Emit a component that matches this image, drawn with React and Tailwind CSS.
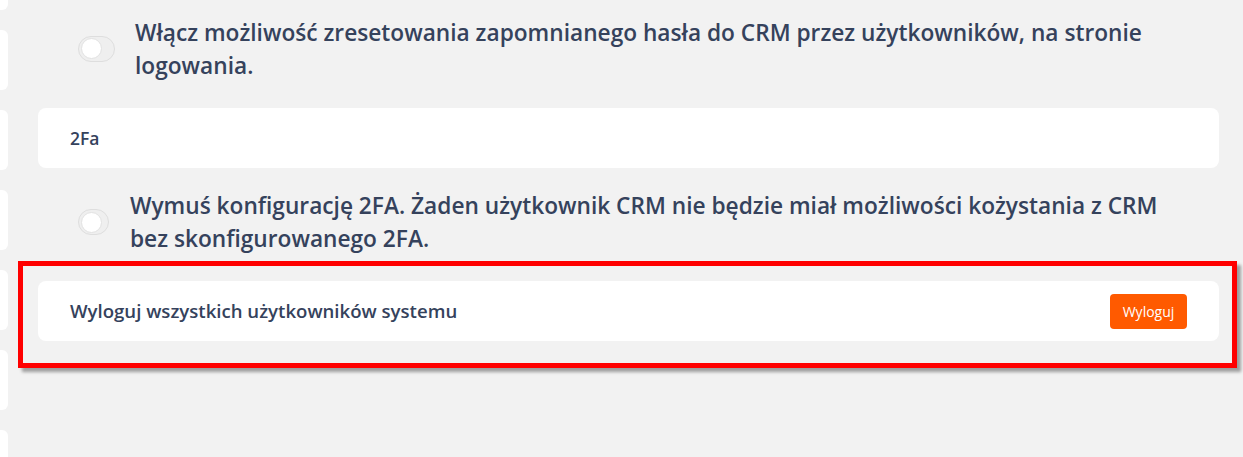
import React from 'react';

const font = { fontFamily: '"Open Sans", "Noto Sans", sans-serif' };

const Toggle = ({ wide }) => (
  <div
    className={`${wide ? 'w-[37px]' : 'w-[31px]'} h-[26px] shrink-0 rounded-full border border-[#dedede] bg-[#efefef] flex items-center px-[2px]`}
  >
    <div className="w-[21px] h-[21px] rounded-full bg-white border border-[#e2e2e2]" />
  </div>
);

const SideStrip = () => (
  <div className="w-[8px] shrink-0 flex flex-col gap-[20px] -mt-[50px]">
    {Array.from({ length: 7 }).map((_, i) => (
      <div key={i} className="h-[60px] shrink-0 bg-white rounded-r-[6px]" />
    ))}
  </div>
);

export default function App() {
  return (
    <div className="w-[1243px] h-[457px] overflow-hidden bg-[#f2f2f2] flex text-[#35425c]" style={font}>
      <SideStrip />

      <div className="flex-1 pl-[30px] pr-[24px] flex flex-col">
        {/* Reset hasła */}
        <div className="flex items-center pl-[40px] pt-[14px] h-[108px] pb-[25px]">
          <Toggle wide />
          <p className="ml-[20px] text-[22.7px] font-semibold leading-[33px] pr-[60px]">
            Włącz możliwość zresetowania zapomnianego hasła do CRM przez użytkowników, na stronie logowania.
          </p>
        </div>

        <div className="h-[60px] shrink-0 bg-white rounded-[8px] flex items-center px-[32px]">
          <span className="text-[17.5px] font-semibold">2Fa</span>
        </div>

        {/* 2FA */}
        <div className="flex items-center pl-[40px] h-[113px] pb-[5px]">
          <Toggle />
          <p className="ml-[21px] text-[22.7px] font-semibold leading-[33px] pr-[40px]">
            Wymuś konfigurację 2FA. Żaden użytkownik CRM nie będzie miał możliwości kożystania z CRM bez skonfigurowanego 2FA.
          </p>
        </div>

        {/* Wyloguj */}
        <div className="relative">
          <div className="h-[60px] bg-white rounded-[8px] flex items-center justify-between pl-[32px] pr-[32px]">
            <span className="text-[18.6px] font-semibold">Wyloguj wszystkich użytkowników systemu</span>
            <button className="h-[35px] w-[77px] rounded-[4px] bg-[#ff5a00] text-white text-[14px]">
              Wyloguj
            </button>
          </div>
          {/* red annotation frame */}
          <div className="absolute -left-[20px] -top-[20px] -right-[18px] -bottom-[27px] border-[5px] border-[#ff0000] shadow-[4px_4px_3px_rgba(0,0,0,0.35)] pointer-events-none" />
        </div>
      </div>
    </div>
  );
}
